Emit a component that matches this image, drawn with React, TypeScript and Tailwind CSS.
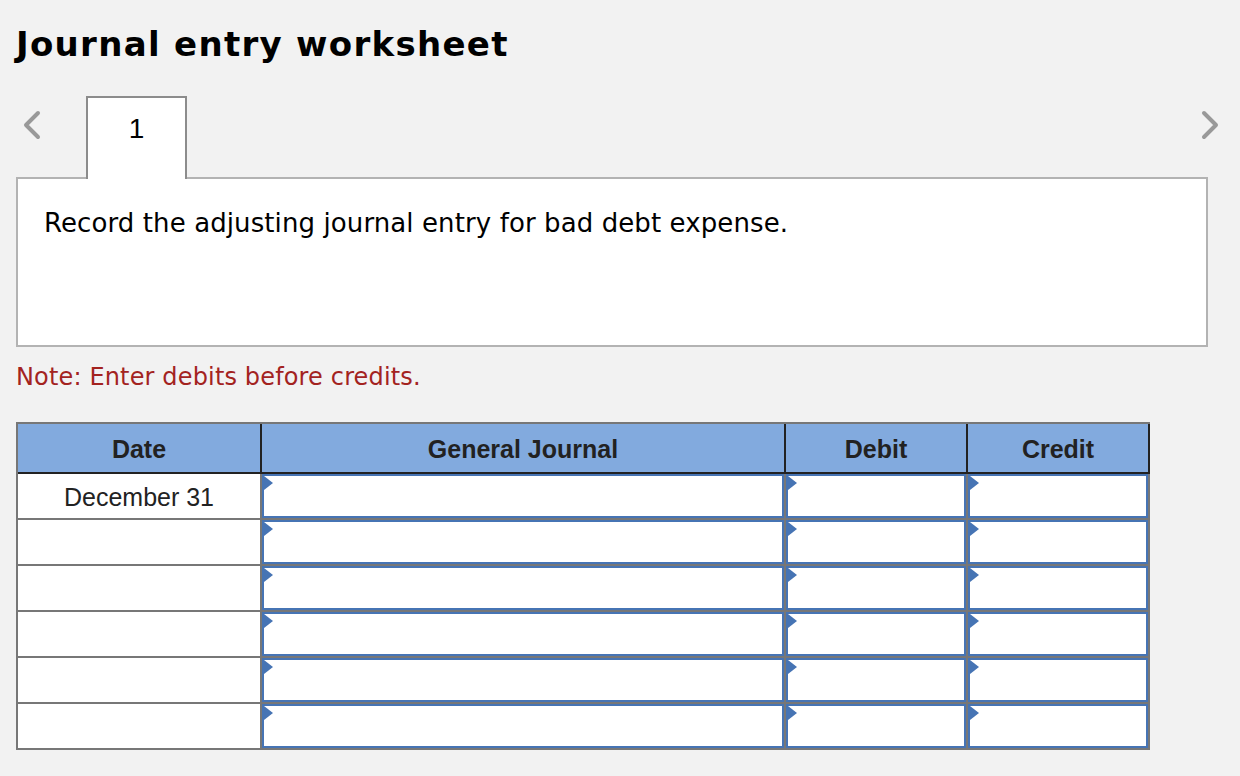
import React from 'react';

const rows = ['December 31', '', '', '', '', ''];

const Chevron = ({ dir }: { dir: 'left' | 'right' }) => (
  <svg width="20" height="30" viewBox="0 0 20 30" fill="none">
    <polyline
      points={dir === 'left' ? '16,3 4,15 16,27' : '4,3 16,15 4,27'}
      stroke="#999"
      strokeWidth="4"
      strokeLinecap="round"
      strokeLinejoin="round"
    />
  </svg>
);

const EntryInput = () => (
  <div className="relative h-full w-full border-2 border-[#4674b4] bg-white">
    <span className="absolute top-0 left-0 h-0 w-0 border-y-[7px] border-l-[9px] border-y-transparent border-l-[#4674b4]" />
  </div>
);

export default function App() {
  return (
    <div className="min-h-screen bg-[#f2f2f2] px-4 pb-8">
      <h1 className="pt-[24px] font-['DejaVu_Sans',sans-serif] text-[34px] leading-[40px] font-bold tracking-[1.3px] text-black">
        Journal entry worksheet
      </h1>

      {/* tabs */}
      <div className="mt-[32px] flex h-[81px] items-start">
        <div className="mt-[14px] ml-[6px] w-[64px]">
          <Chevron dir="left" />
        </div>
        <div className="relative z-10 -mb-[2px] h-[83px] w-[101px] border-2 border-b-0 border-[#8c8c8c] bg-white pt-[17px] text-center font-['Liberation_Sans',Arial,sans-serif] text-[28px] leading-none text-black">
          1
        </div>
        <div className="mt-[14px] mr-[4px] ml-auto">
          <Chevron dir="right" />
        </div>
      </div>

      <div className="h-[170px] w-[1192px] border-2 border-[#b3b3b3] bg-white pt-[28px] pl-[26px]">
        <p className="font-['DejaVu_Sans',sans-serif] text-[26px] leading-[32px] tracking-[0.1px] text-black">
          Record the adjusting journal entry for bad debt expense.
        </p>
      </div>

      <p className="mt-[15px] font-['DejaVu_Sans',sans-serif] text-[24px] leading-[30px] tracking-[0.15px] text-[#a3231f]">
        Note: Enter debits before credits.
      </p>

      {/* journal table */}
      <div className="mt-[30px] w-[1134px] border-t-2 border-l-2 border-[#777] font-['Liberation_Sans',Arial,sans-serif] text-[25px] text-[#222]">
        <div className="flex h-[50px] border-b-2 border-[#222] bg-[#82aade] font-bold">
          <div className="flex w-[244px] items-center justify-center border-r-2 border-[#222] pt-[2px] leading-none">Date</div>
          <div className="flex w-[524px] items-center justify-center border-r-2 border-[#222] pt-[2px] leading-none">General Journal</div>
          <div className="flex w-[182px] items-center justify-center border-r-2 border-[#222] pt-[2px] leading-none">Debit</div>
          <div className="flex w-[182px] items-center justify-center border-r-2 border-[#222] pt-[2px] leading-none">Credit</div>
        </div>
        {rows.map((date, i) => (
          <div key={i} className="flex h-[46px] border-b-2 border-[#777]">
            <div className="flex w-[244px] items-center justify-center border-r-2 border-[#777] bg-white pt-[2px] leading-none">
              {date}
            </div>
            <div className="w-[524px] border-r-2 border-[#777]">
              <EntryInput />
            </div>
            <div className="w-[182px] border-r-2 border-[#777]">
              <EntryInput />
            </div>
            <div className="w-[182px] border-r-2 border-[#777]">
              <EntryInput />
            </div>
          </div>
        ))}
      </div>
    </div>
  );
}
